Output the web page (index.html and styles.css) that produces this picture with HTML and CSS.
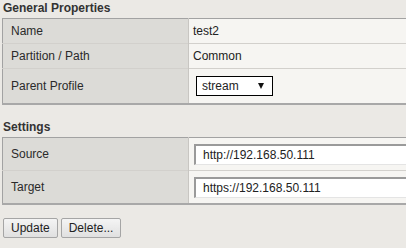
FILE: index.html
```html
<!DOCTYPE html>
<html lang="en">
<head>
    <meta charset="UTF-8">
    <title>Stream Profile - test2</title>
    <link rel="stylesheet" href="styles.css">
</head>
<body>
    <h2 class="section-title">General Properties</h2>
    <table class="props">
        <colgroup>
            <col class="label-col">
            <col>
        </colgroup>
        <tr>
            <td class="label">Name</td>
            <td class="value">test2</td>
        </tr>
        <tr>
            <td class="label">Partition / Path</td>
            <td class="value">Common</td>
        </tr>
        <tr class="tall">
            <td class="label">Parent Profile</td>
            <td class="value">
                <span class="select-wrap">
                    <select id="parentProfile">
                        <option>stream</option>
                    </select>
                </span>
            </td>
        </tr>
    </table>

    <h2 class="section-title second">Settings</h2>
    <table class="props">
        <colgroup>
            <col class="label-col">
            <col>
        </colgroup>
        <tr class="field-row">
            <td class="label">Source</td>
            <td class="value"><input type="text" value="http://192.168.50.111"></td>
        </tr>
        <tr class="field-row">
            <td class="label">Target</td>
            <td class="value"><input type="text" value="https://192.168.50.111"></td>
        </tr>
    </table>

    <div class="actions">
        <button type="button">Update</button>
        <button type="button">Delete...</button>
    </div>
</body>
</html>
```

FILE: styles.css
```css
/* General Styles */
html, body {
    overflow: hidden;
}

body {
    margin: 0;
    padding: 0 0 0 2px;
    background: #ebe9e5;
    font-family: "Liberation Sans", Arial, sans-serif;
    font-size: 12px;
    color: #222;
}

.section-title {
    margin: 0;
    padding: 1px 0 0 1px;
    height: 17px;
    font-size: 12px;
    font-weight: bold;
    line-height: 14px;
    color: #333;
}

.section-title.second {
    margin-top: 14px;
    height: 17px;
}

/* Property tables */
.props {
    width: 100%;
    table-layout: fixed;
    border-collapse: collapse;
    border-top: 1px solid #a2a2a2;
    border-bottom: 2px solid #a8a8a8;
    border-left: 1px solid #a2a2a2;
}

.props col.label-col {
    width: 186px;
}

.props td {
    height: 24px;
    padding: 0 0 0 8px;
    border-top: 1px solid #d2d0cc;
    vertical-align: middle;
    line-height: 15px;
}

.props tr:first-child td {
    border-top: none;
}

.props td.label {
    background: #dcdbd7;
    border-right: 1px solid #c8c6c2;
    color: #2a2a2a;
}

.props td.value {
    padding-left: 4px;
    background: #f6f5f2;
}

.props tr.tall td {
    height: 34px;
}

.props tr.field-row td {
    height: 32px;
}

.props tr.field-row td.value {
    padding-left: 5px;
}

/* Select box */
.select-wrap {
    position: relative;
    display: inline-block;
    margin-left: 3px;
}

.select-wrap select {
    appearance: none;
    -webkit-appearance: none;
    width: 77px;
    height: 20px;
    padding: 0 0 0 5px;
    border: 1px solid #000;
    border-radius: 0;
    background: #fff;
    font-family: "Liberation Sans", Arial, sans-serif;
    font-size: 12px;
    color: #222;
}

.select-wrap::after {
    content: "";
    position: absolute;
    right: 9px;
    top: 7px;
    border-left: 3px solid transparent;
    border-right: 3px solid transparent;
    border-top: 6px solid #111;
    pointer-events: none;
}

/* Text inputs */
.props input {
    display: block;
    width: 100%;
    height: 21px;
    box-sizing: border-box;
    padding: 0 0 0 7px;
    border-top: 2px solid #9a9a9a;
    border-left: 2px solid #9a9a9a;
    border-bottom: 1px solid #e4e4e4;
    border-right: none;
    background: #fff;
    font-family: "Liberation Sans", Arial, sans-serif;
    font-size: 12px;
    color: #222;
}

/* Buttons */
.actions {
    display: flex;
    gap: 3px;
    margin-top: 13px;
    padding-left: 1px;
}

.actions button {
    height: 20px;
    padding: 0 7px;
    border: 1px solid #a5a5a5;
    border-radius: 2px;
    background: linear-gradient(#f4f4f4, #e0e0e0);
    font-family: "Liberation Sans", Arial, sans-serif;
    font-size: 12px;
    color: #222;
    cursor: pointer;
}
```
